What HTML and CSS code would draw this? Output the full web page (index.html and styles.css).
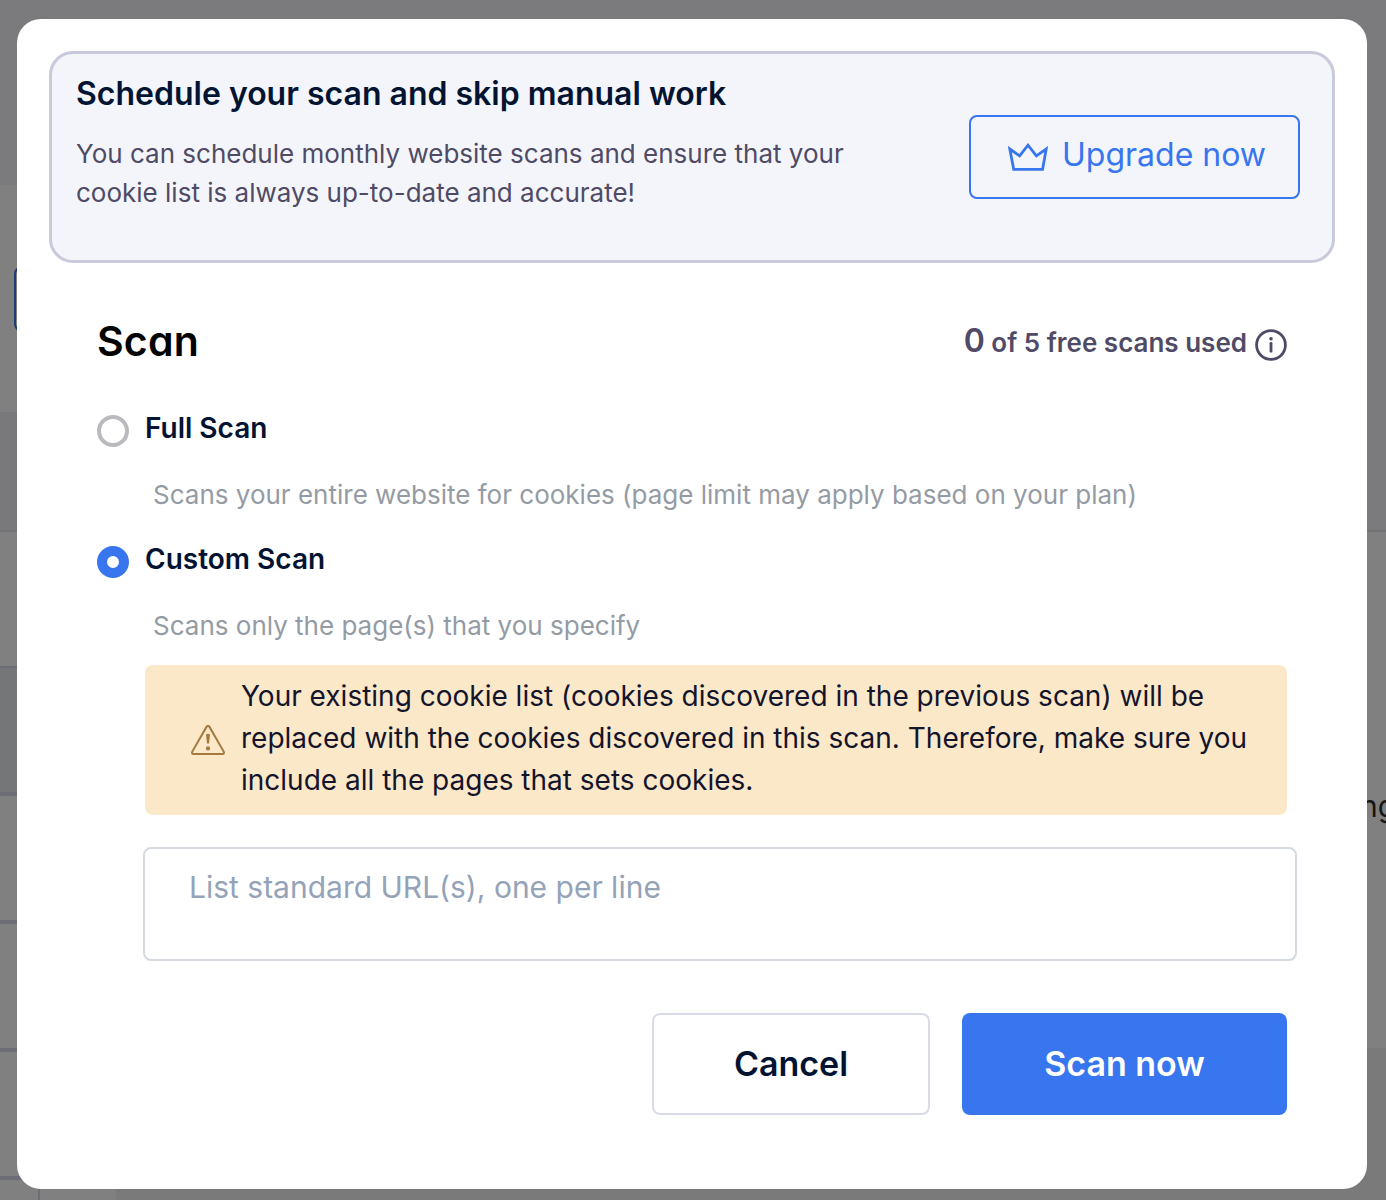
FILE: index.html
```
<!DOCTYPE html>
<html lang="en">
<head>
<meta charset="utf-8">
<title>Scan</title>
<link rel="stylesheet" href="styles.css">
</head>
<body>
<div class="stage">
  <div class="page" aria-hidden="true">
    <div class="page-left">
      <div class="band band-top"></div>
      <div class="band band-action"><span class="page-button"></span></div>
      <div class="band band-tabs"></div>
      <div class="band band-filter"></div>
      <div class="band band-head"></div>
      <div class="band row"></div>
      <div class="band row"></div>
      <div class="band row"></div>
      <div class="band row-last"><span class="cell"></span></div>
    </div>
    <div class="page-right">
      <div class="side-top"></div>
      <div class="side-text">ng</div>
      <div class="side-bottom"></div>
    </div>
  </div>

  <main class="modal">
    <section class="banner">
      <div class="banner-copy">
        <h2 class="banner-title">Schedule your scan and skip manual work</h2>
        <p class="banner-text">You can schedule monthly website scans and ensure that your<br>cookie list is always up-to-date and accurate!</p>
      </div>
      <button class="upgrade">
        <svg class="crown" viewBox="0 0 40 28" width="40" height="28"><path d="M1.8 6 L11.6 12.9 L20 2.2 L28.4 12.9 L38.2 6 L34.6 26.3 H5.7 Z"/></svg>
        <span class="upgrade-label">Upgrade now</span>
      </button>
    </section>

    <section class="body">
      <header class="head">
        <h1 class="heading">Scan</h1>
        <div class="usage">
          <span class="usage-text"><span class="usage-count">0</span> of 5 free scans used</span>
          <svg class="info" viewBox="0 0 32 32" width="32" height="32"><circle cx="16" cy="16" r="14.4"/><path class="info-dot" d="M16 9.7v.01"/><path class="info-stem" d="M16 14.3v8"/></svg>
        </div>
      </header>

      <label class="option"><span class="radio"></span><span class="option-label">Full Scan</span></label>
      <p class="hint">Scans your entire website for cookies (page limit may apply based on your plan)</p>
      <label class="option"><span class="radio radio-on"></span><span class="option-label">Custom Scan</span></label>
      <p class="hint hint-last">Scans only the page(s) that you specify</p>

      <div class="alert">
        <svg class="warn" viewBox="0 0 34 30" width="34" height="30"><path class="warn-frame" d="M15.5 1.9 Q17 -.3 18.5 1.9 L32.7 26.6 Q33.6 28.9 31.6 29 H2.4 Q.4 28.9 1.3 26.6 Z"/><path class="warn-mark" d="M15 9.5 Q17 8 19 9.5 L18 18.6 H16 Z"/><circle class="warn-mark" cx="17" cy="23.4" r="2.1"/></svg>
        <p class="alert-text">Your existing cookie list (cookies discovered in the previous scan) will be<br>replaced with the cookies discovered in this scan. Therefore, make sure you<br>include all the pages that sets cookies.</p>
      </div>

      <div class="urls">List standard URL(s), one per line</div>

      <div class="actions">
        <button class="btn btn-cancel">Cancel</button>
        <button class="btn btn-scan">Scan now</button>
      </div>
    </section>
  </main>
</div>
</body>
</html>
```
FILE: styles.css
```
* { box-sizing: border-box; }
body { margin: 0; font-family: Inter, "Liberation Sans", sans-serif; }
h1, h2, p { margin: 0; }
button { font-family: inherit; margin: 0; padding: 0; }

.stage { display: grid; grid-template: 1200px / 1386px; overflow: hidden; height: 1200px; }
.page, .modal { grid-area: 1 / 1; }

/* dimmed page behind the dialog */
.page { display: flex; justify-content: space-between; background: linear-gradient(#7b7b7d 185px, #7a7a7a 185px); }
.page-left { width: 116px; display: flex; flex-direction: column; }
.band { background: #808080; }
.band-top { height: 185px; background: #7b7b7d; }
.band-action { height: 227px; padding: 81px 0 0 14px; }
.page-button { display: block; width: 60px; height: 66px; border: 2px solid #1c3b7a; border-radius: 8px; }
.band-tabs { height: 120px; background: #79797b; border-bottom: 2px solid #727274; }
.band-filter { height: 136px; border-bottom: 2px solid #6d6d75; }
.band-head { height: 128px; background: #757678; border-bottom: 4px solid #6d6d75; }
.row { height: 128px; border-bottom: 4px solid #6d6d75; }
.row-last { height: 20px; }
.cell { display: block; width: 40px; height: 20px; border-right: 2px solid #6d6d75; }
.page-right { width: 60px; display: flex; flex-direction: column; }
.side-top { height: 532px; background: #7b7b7d; border-bottom: 2px solid #727274; }
.side-text { height: 516px; padding: 255px 0 0 34px; background: #808080; color: #161616; font-size: 30px; line-height: 38px; }
.side-bottom { flex: 1; background: #7a7a7a; }

.modal { margin: 19px 19px 11px 17px; padding: 32px; background: #fff; border-radius: 24px; }

.banner { display: flex; justify-content: space-between; height: 212px; padding: 20px 32px 0 24px; background: #f4f5fa; border: 3px solid #c8c9dc; border-radius: 24px; }
.banner-title { font-size: 32px; font-weight: 600; line-height: 40px; color: #031433; }
.banner-text { margin-top: 20px; font-size: 26px; line-height: 39px; color: #4f4b66; }
.upgrade { display: flex; align-items: flex-start; gap: 14px; width: 331px; height: 84px; margin-top: 41px; padding: 26px 0 0 37px; background: none; border: 2px solid #3876f0; border-radius: 8px; color: #3876f0; }
.crown { fill: none; stroke: #3876f0; stroke-width: 2.8; }
.upgrade-label { margin-top: -8px; font-size: 32px; line-height: 40px; }

.body { padding: 54px 48px 0; }
.head { display: flex; justify-content: space-between; align-items: flex-start; height: 88px; }
.heading { font-size: 41px; font-weight: 600; line-height: 48px; letter-spacing: .2px; font-feature-settings: "cv11"; color: #000; }
.usage { display: flex; gap: 8px; color: #4f4b66; }
.usage-text { font-size: 26px; font-weight: 600; line-height: 48px; }
.usage-count { font-size: 32px; }
.info { margin-top: 12px; fill: none; stroke: #4f4b66; stroke-width: 2.8; }
.info-dot { stroke-width: 3.6; stroke-linecap: round; }
.info-stem { stroke-linecap: round; }

.option { display: flex; gap: 16px; height: 60px; padding-top: 10px; }
.radio { width: 32px; height: 32px; border: 4px solid #b9babd; border-radius: 50%; }
.radio-on { border: 10px solid #3876f0; }
.option-label { margin-top: -4px; font-size: 28px; font-weight: 600; line-height: 34px; color: #031433; }
.hint { height: 71px; margin-left: 56px; padding-top: 10px; font-size: 26px; line-height: 39px; color: #949ba4; }
.hint-last { height: 69px; }

.alert { display: flex; align-items: center; gap: 16px; height: 150px; margin-left: 48px; padding: 0 0 0 46px; background: #fbe8c9; border-radius: 8px; }
.warn { flex: none; }
.warn-frame { fill: none; stroke: #a47a3e; stroke-width: 2; }
.warn-mark { fill: #a47a3e; }
.alert-text { margin-top: -4px; font-size: 28px; line-height: 42px; color: #14142b; white-space: nowrap; }

.urls { height: 114px; margin: 32px -10px 0 46px; padding: 19px 44px; border: 2px solid #d5dae1; border-radius: 8px; font-size: 30px; line-height: 38px; color: #94a3b8; }
.actions { display: flex; justify-content: flex-end; gap: 32px; margin-top: 52px; }
.btn { height: 102px; padding-bottom: 2px; border-radius: 8px; font-size: 34px; font-weight: 600; }
.btn-cancel { width: 278px; background: #fff; border: 2px solid #d9dbe9; color: #031433; }
.btn-scan { width: 325px; background: #3876f0; border: 0; color: #fff; }
```
